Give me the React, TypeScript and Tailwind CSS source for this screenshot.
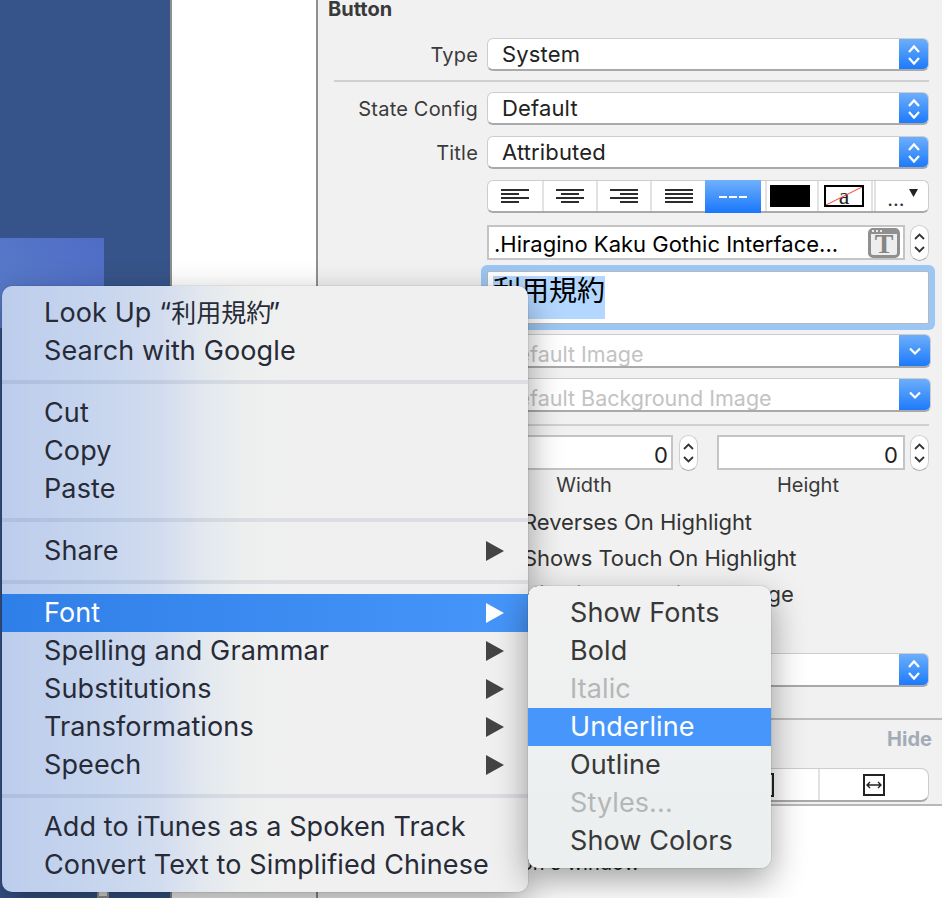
import type { ReactNode } from "react";

const sans = "font-['Inter','Noto_Sans_CJK_JP',sans-serif]";

function Chevrons({ color = "white", down = true, up = true }: { color?: string; down?: boolean; up?: boolean }) {
  return (
    <svg width="14" height="26" viewBox="0 0 14 26" fill="none" stroke={color} strokeWidth="2.2">
      {up && <path d="M2 10 L7 4.5 L12 10" />}
      {down && <path d={up ? "M2 16 L7 21.5 L12 16" : "M2 10.5 L7 15.5 L12 10.5"} />}
    </svg>
  );
}

function Popup({ value, muted, single, className = "" }: { value?: string; muted?: boolean; single?: boolean; className?: string }) {
  return (
    <div className={`flex rounded-[6px] bg-white border border-[#cdcdcd] border-b-[#a9a9a9] border-b-2 overflow-hidden ${className}`}>
      <div
        className={`flex-1 pl-[14px] flex items-center ${
          muted ? "text-[21.5px] pt-[8px] text-[#c3c3c3]" : "text-[22px] tracking-[0.15px] text-[#222]"
        }`}
      >
        {value}
      </div>
      <div className={`-my-px -mb-[2px] flex items-center justify-center bg-[linear-gradient(#6fb0fb,#1877fb)] ${single ? "w-[31px]" : "w-[29px]"}`}>
        <Chevrons down up={!single} />
      </div>
    </div>
  );
}

function Row({ label, children, className = "" }: { label?: string; children: ReactNode; className?: string }) {
  return (
    <div className={`flex items-center ${className}`}>
      <div className="w-[160px] text-right text-[20px] tracking-[0.2px] text-[#3a3a3a]">{label}</div>
      <div className="ml-[9px] flex-1 h-full">{children}</div>
    </div>
  );
}

function Stepper() {
  return (
    <div className="w-[19px] h-[36px] rounded-full bg-white border border-[#cfcfcf] border-b-[#aaa] flex items-center justify-center">
      <svg width="13" height="26" viewBox="0 0 13 26" fill="none" stroke="#333" strokeWidth="1.8">
        <path d="M2 9 L6.5 4.5 L11 9" />
        <path d="M2 17 L6.5 21.5 L11 17" />
      </svg>
    </div>
  );
}

function AlignIcon({ lines }: { lines: [number, number][] }) {
  return (
    <svg width="28" height="14" viewBox="0 0 28 14" fill="#2c2c2c">
      {lines.map(([x, w], i) => (
        <rect key={i} x={x} y={i * 4} width={w} height="2" />
      ))}
    </svg>
  );
}

function Segment({ children, className = "" }: { children?: ReactNode; className?: string }) {
  return <div className={`flex items-center justify-center ${className}`}>{children}</div>;
}

function Arrow({ color = "#444" }: { color?: string }) {
  return (
    <svg width="18" height="20" viewBox="0 0 18 20" className="shrink-0">
      <polygon points="0,0 18,10 0,20" fill={color} />
    </svg>
  );
}

function MenuItem({ label, arrow, active }: { label: ReactNode; arrow?: boolean; active?: boolean }) {
  return (
    <div
      className={`h-[38px] pl-[42px] pr-[24px] flex items-center justify-between text-[27px] tracking-[0.12px] whitespace-nowrap ${
        active ? "bg-[linear-gradient(90deg,#2f7fe8,#4696fa)] text-white" : "text-[#272b38]"
      }`}
    >
      <span>{label}</span>
      {arrow && <Arrow color={active ? "white" : "#444"} />}
    </div>
  );
}

function MenuSep() {
  return (
    <div className="h-[24px] flex items-center">
      <div className="w-full h-[4px] bg-[#33406a]/10" />
    </div>
  );
}

function SubItem({ label, disabled, active }: { label: string; disabled?: boolean; active?: boolean }) {
  return (
    <div
      className={`h-[38px] pl-[42px] flex items-center text-[27px] tracking-[0.1px] ${
        active ? "bg-[#4696fc] text-white" : disabled ? "text-[#b4b6b7]" : "text-[#383838]"
      }`}
    >
      {label}
    </div>
  );
}

export default function App() {
  return (
    <div className={`relative w-[942px] h-[898px] overflow-hidden flex ${sans}`}>
      {/* canvas */}
      <div className="relative w-[170px] bg-[#37548a]">
        <div className="absolute left-0 top-[238px] w-[104px] h-[90px] bg-[linear-gradient(45deg,#5a7dcb,#4f6cc5)]" />
        <div className="absolute left-[97px] top-[890px] w-[12px] h-[8px] border-2 border-[#9a9a9a] bg-[#e8e8e8]" />
      </div>

      {/* outline column */}
      <div className="w-[148px] bg-white border-x-2 border-[#8f8f8f]" />

      {/* attributes inspector */}
      <div className="w-[624px] bg-[#f1f1f1] flex flex-col pr-[13px]">
        <div className="pl-[10px] h-[18px] leading-[18px] text-[20px] font-bold text-[#3a3a3a]">Button</div>

        <Row label="Type" className="mt-[20px] h-[33px]">
          <Popup value="System" className="h-full" />
        </Row>
        <div className="mt-[9px] ml-[16px] h-[2px] bg-[#cfcfcf]" />
        <Row label="State Config" className="mt-[10px] h-[33px]">
          <Popup value="Default" className="h-full" />
        </Row>
        <Row label="Title" className="mt-[11px] h-[33px]">
          <Popup value="Attributed" className="h-full" />
        </Row>

        <Row className="mt-[11px] h-[33px]">
          <div className="h-full flex rounded-[6px] bg-white border border-[#cdcdcd] border-b-2 border-b-[#a9a9a9]">
            <Segment className="w-[56px] border-r-2 border-[#e2e2e2]">
              <AlignIcon lines={[[0, 28], [0, 18], [0, 28], [0, 18]]} />
            </Segment>
            <Segment className="w-[54px] border-r-2 border-[#e2e2e2]">
              <AlignIcon lines={[[0, 28], [5, 18], [0, 28], [5, 18]]} />
            </Segment>
            <Segment className="w-[54px] border-r-2 border-[#e2e2e2]">
              <AlignIcon lines={[[0, 28], [10, 18], [0, 28], [10, 18]]} />
            </Segment>
            <Segment className="w-[53px]">
              <AlignIcon lines={[[0, 28], [0, 28], [0, 28], [0, 28]]} />
            </Segment>
            <Segment className="w-[56px] -my-px -mb-[2px] bg-[linear-gradient(#70b0fb,#1877fb)]">
              <svg width="28" height="2" viewBox="0 0 28 2" fill="white">
                <rect x="0" width="8" height="2" />
                <rect x="10" width="8" height="2" />
                <rect x="20" width="8" height="2" />
              </svg>
            </Segment>
            <Segment className="w-[54px] border-x-2 border-[#e2e2e2] ml-[4px] !justify-start pl-[3px]">
              <div className="w-[40px] h-[22px] bg-black" />
            </Segment>
            <Segment className="w-[54px] border-r-2 border-[#e2e2e2] !justify-start pl-[5px]">
              <div className="relative w-[40px] h-[22px] border-2 border-black bg-white flex items-center justify-center font-['Liberation_Serif',serif] text-[24px] leading-none text-[#222]">
                a
                <svg className="absolute inset-0" width="36" height="18" viewBox="0 0 36 18">
                  <path d="M0 18 L36 0" stroke="#f04030" strokeWidth="1" />
                </svg>
              </div>
            </Segment>
            <Segment className="flex-1 border-l-2 border-[#e2e2e2] ml-[1px] relative">
              <span className="text-[20px] leading-none text-[#333] mt-[6px] mr-[12px]">...</span>
              <svg className="absolute right-[10px] top-[8px]" width="9" height="8" viewBox="0 0 9 8">
                <polygon points="0,0 9,0 4.5,8" fill="#222" />
              </svg>
            </Segment>
          </div>
        </Row>

        <Row className="mt-[12px] h-[35px]">
          <div className="h-full flex items-center justify-between">
            <div className="w-[418px] h-full bg-white border-2 border-[#c4c4c4] flex items-center pl-[5px] pr-[3px] justify-between">
              <span className="text-[22px] text-black whitespace-nowrap pt-[3px]">.Hiragino Kaku Gothic Interface...</span>
              <div className="relative w-[32px] h-[30px] rounded-[5px] bg-[#eeeeee] border-[3px] border-t-[6px] border-[#8f8f8f] flex items-center justify-center font-['Liberation_Serif',serif] font-bold text-[28px] leading-none text-[#858585] shrink-0">
                T
                <div className="absolute -top-[4px] left-[1px] flex gap-[2px]">
                  <div className="w-[2px] h-[2px] bg-[#e8e8e8]" />
                  <div className="w-[2px] h-[2px] bg-[#e8e8e8]" />
                  <div className="w-[2px] h-[2px] bg-[#e8e8e8]" />
                </div>
              </div>
            </div>
            <Stepper />
          </div>
        </Row>

        <Row className="mt-[11px] h-[53px]">
          <div className="h-full bg-white border border-[#b9b9b9] ring-[6px] ring-[#9cc6f3] rounded-[2px] pl-[5px] pt-[4px]">
            <span className="inline-block h-[43px] leading-[30px] bg-[#b3d7ff] text-[28px] text-black">利用規約</span>
          </div>
        </Row>

        <Row className="mt-[10px] h-[34px]">
          <Popup value="Default Image" muted single className="h-full -mr-[2px]" />
        </Row>
        <Row className="mt-[10px] h-[34px]">
          <Popup value="Default Background Image" muted single className="h-full -mr-[2px]" />
        </Row>
        <div className="mt-[12px] ml-[16px] h-[2px] bg-[#cfcfcf]" />

        <Row className="mt-[9px] h-[35px]">
          <div className="h-full flex items-start">
            <div className="w-[187px] h-full bg-white border-2 border-[#c4c4c4] text-right pr-[3px] text-[22px] leading-[36px] text-[#222]">0</div>
            <div className="ml-[6px]">
              <Stepper />
            </div>
            <div className="ml-[19px] w-[188px] h-full bg-white border-2 border-[#c4c4c4] text-right pr-[5px] text-[22px] leading-[36px] text-[#222]">0</div>
            <div className="ml-[5px]">
              <Stepper />
            </div>
          </div>
        </Row>
        <Row className="mt-[3px] h-[24px]">
          <div className="h-full flex text-[20px] leading-[24px] text-[#3a3a3a]">
            <div className="w-[194px] text-center">Width</div>
            <div className="ml-[33px] w-[188px] text-center">Height</div>
          </div>
        </Row>

        <div className="mt-[7px] ml-[205px] text-[22px] leading-[36px] tracking-[-0.05px] text-[#333] whitespace-nowrap">
          <div className="h-[36px]">Reverses On Highlight</div>
          <div className="h-[36px]">Shows Touch On Highlight</div>
          <div className="h-[36px]">Highlighted Adjusts Image</div>
        </div>

        <Row className="mt-[41px] h-[34px]">
          <Popup className="h-full" />
        </Row>

        <div className="mt-[31px] -mr-[13px] h-[2px] bg-[#bdbdbd]" />
        <div className="h-[38px] flex items-center justify-end text-[20px] font-bold text-[#a3abb8] -mr-[3px]">Hide</div>

        <Row className="mt-[10px] h-[34px]">
          <div className="h-full flex rounded-[8px] bg-white border border-[#cdcdcd] border-b-2 border-b-[#a9a9a9]">
            <div className="w-[332px] border-r-2 border-[#e2e2e2] flex items-center justify-end pr-[44px]">
              <svg width="22" height="30" viewBox="0 0 22 30" fill="none" stroke="#222" strokeWidth="2">
                <path d="M16 4 H21 V26 H16" />
              </svg>
            </div>
            <div className="flex-1 flex items-center justify-center">
              <svg width="22" height="22" viewBox="0 0 22 22" fill="none" stroke="#222">
                <rect x="1" y="1" width="20" height="20" strokeWidth="2" />
                <path d="M4 11 H18 M7 8 L4 11 L7 14 M15 8 L18 11 L15 14" strokeWidth="1.4" />
              </svg>
            </div>
          </div>
        </Row>

        <div className="mt-[2px] -mr-[13px] h-[60px] bg-white border-y-2 border-[#b8b8b8]" />
        <div className="-mr-[13px] flex-1 bg-white -mt-[13px]">
          <div className="w-[322px] text-right text-[20px] leading-[24px] text-[#222] whitespace-nowrap">the button's window</div>
        </div>
      </div>

      {/* context menu */}
      <div className="absolute left-[2px] top-[286px] w-[526px] h-[606px] py-[8px] rounded-[10px] bg-[linear-gradient(90deg,#bccdec_0%,#c8d6ee_20%,#d2dcef_30%,#e2e8ef_38%,#edefef_46%,#f0f0f0_55%)] shadow-[0_0_1px_rgba(0,0,0,0.6),0_12px_34px_rgba(0,0,0,0.38)]">
        <MenuItem
          label={
            <>
              Look Up “<span className="text-[25px] tracking-normal">利用規約</span>
              <span className="-ml-[3px]">”</span>
            </>
          }
        />
        <MenuItem label="Search with Google" />
        <MenuSep />
        <MenuItem label="Cut" />
        <MenuItem label="Copy" />
        <MenuItem label="Paste" />
        <MenuSep />
        <MenuItem label="Share" arrow />
        <MenuSep />
        <MenuItem label="Font" arrow active />
        <MenuItem label="Spelling and Grammar" arrow />
        <MenuItem label="Substitutions" arrow />
        <MenuItem label="Transformations" arrow />
        <MenuItem label="Speech" arrow />
        <MenuSep />
        <MenuItem label="Add to iTunes as a Spoken Track" />
        <MenuItem label="Convert Text to Simplified Chinese" />
      </div>

      {/* font submenu */}
      <div className="absolute left-[528px] top-[586px] w-[243px] h-[282px] py-[8px] rounded-[10px] bg-[linear-gradient(#f1f1f1,#ebeff0)] shadow-[0_0_1px_rgba(0,0,0,0.6),0_12px_34px_rgba(0,0,0,0.38)]">
        <SubItem label="Show Fonts" />
        <SubItem label="Bold" />
        <SubItem label="Italic" disabled />
        <SubItem label="Underline" active />
        <SubItem label="Outline" />
        <SubItem label="Styles..." disabled />
        <SubItem label="Show Colors" />
      </div>
    </div>
  );
}
